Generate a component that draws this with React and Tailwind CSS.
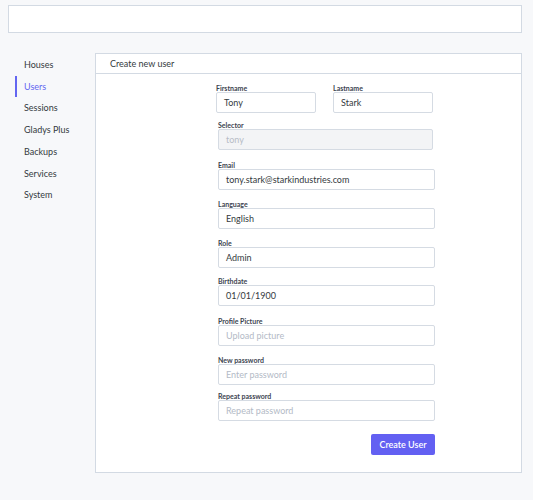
import React from "react";

const menu = ["Houses", "Users", "Sessions", "Gladys Plus", "Backups", "Services", "System"];

function Field({ label, value, placeholder, disabled, className = "" }) {
  let tone = "bg-white text-[#343a40]";
  if (disabled) tone = "bg-[#f3f4f6] text-[#b7bcc6]";
  else if (!value) tone = "bg-white text-[#b3bac6]";
  return (
    <div className={className}>
      <div className="text-[7px] font-bold text-[#3d4450] leading-[8px]">{label}</div>
      <div
        className={
          "h-[21px] rounded-[2px] border border-[#d5dbe3] flex items-center px-[7px] text-[9px] " + tone
        }
      >
        {value || placeholder}
      </div>
    </div>
  );
}

export default function App() {
  return (
    <div
      className="w-[533px] h-[500px] bg-[#f7f8fa] pt-[5px] text-[#343a40]"
      style={{ fontFamily: "Lato, 'Noto Sans', sans-serif" }}
    >
      <div className="ml-[8px] w-[514px] h-[28px] bg-white border border-[#d3dae3]" />
      <div className="flex mt-[20px]">
        <div className="w-[87px] pl-[15px] pt-[1px]">
          {menu.map((m) => (
            <div
              key={m}
              className={
                "h-[21.7px] flex items-center pl-[7px] text-[9px] border-l-2 " +
                (m === "Users" ? "border-[#6366f1] text-[#6366f1]" : "border-transparent text-[#343a40]")
              }
            >
              {m}
            </div>
          ))}
        </div>
        <div className="ml-[8px] w-[427px] h-[420px] bg-white border border-[#d3dae3]">
          <div className="h-[20px] border-b border-[#d3dae3] flex items-center pl-[14px] text-[9px]">
            Create new user
          </div>
          <div className="ml-[122px] w-[217px] pt-[10px]">
            <div className="flex gap-[17px] -ml-[2px]">
              <Field label="Firstname" value="Tony" className="w-[100px]" />
              <Field label="Lastname" value="Stark" className="w-[100px]" />
            </div>
            <Field label="Selector" placeholder="tony" disabled className="mt-[8px] w-[215px]" />
            <Field label="Email" value="tony.stark@starkindustries.com" className="mt-[11px]" />
            <Field label="Language" value="English" className="mt-[10px]" />
            <Field label="Role" value="Admin" className="mt-[10px]" />
            <Field label="Birthdate" value="01/01/1900" className="mt-[9px]" />
            <Field label="Profile Picture" placeholder="Upload picture" className="mt-[11px]" />
            <Field label="New password" placeholder="Enter password" className="mt-[10px]" />
            <Field label="Repeat password" placeholder="Repeat password" className="mt-[7px]" />
            <div className="flex justify-end mt-[13px]">
              <div className="w-[64px] h-[21px] rounded-[2px] bg-[#6360f2] text-white text-[9px] font-semibold flex items-center justify-center">
                Create User
              </div>
            </div>
          </div>
        </div>
      </div>
    </div>
  );
}
